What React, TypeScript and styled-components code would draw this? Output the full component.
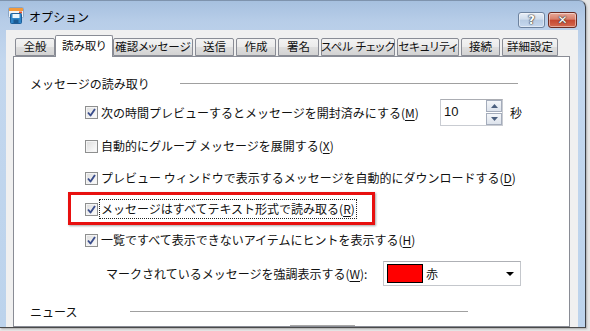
import React from 'react';
import styled, { createGlobalStyle } from 'styled-components';

const Global = createGlobalStyle`
  html, body { margin: 0; padding: 0; background: #ececec; }
  body {
    font-family: "Noto Sans CJK JP", "Noto Sans", sans-serif;
    font-size: 12px;
    color: #111;
  }
`;

const Stage = styled.div`
  width: 590px;
  height: 331px;
  overflow: hidden;
  background: #e6e6e6;
`;

const Window = styled.div`
  width: 586px;
  height: 328px;
  box-sizing: border-box;
  border-right: 1px solid #3a3f47;
  border-bottom: 1px solid #4a4a4a;
  border-top: 1px solid #7e93ad;
  border-top-right-radius: 7px;
  background: linear-gradient(#a6c0df 0px, #b7cde8 20px, #c3d7ee 60px, #bcd3ec 100%);
  display: flex;
  flex-direction: column;
  overflow: hidden;
  box-shadow: 1px 1px 2px rgba(0, 0, 0, 0.25);
`;

const TitleBar = styled.div`
  height: 29px;
  display: flex;
  align-items: center;
  padding: 0 8px 0 8px;
  flex: none;
`;

const Title = styled.div`
  font-size: 12px;
  margin-left: 5px;
  color: #000;
  margin-top: 2px;
  flex: 1;
`;

const CaptionButtons = styled.div`
  display: flex;
  gap: 3px;
  align-self: flex-start;
  margin-top: 11px;
`;

const CapButton = styled.div<{ $close?: boolean }>`
  width: ${(p) => (p.$close ? 29 : 27)}px;
  height: 16px;
  box-sizing: border-box;
  border-radius: 3px;
  border: 1px solid ${(p) => (p.$close ? '#6b2b22' : '#6d829e')};
  background: ${(p) =>
    p.$close
      ? 'linear-gradient(#e9a999 0%, #d77e6a 45%, #c5452e 50%, #d4694f 100%)'
      : 'linear-gradient(#e7eef7 0%, #cfdcec 45%, #b7cbe3 50%, #c6d8ee 100%)'};
  box-shadow: inset 0 0 0 1px rgba(255, 255, 255, 0.45);
  display: flex;
  align-items: center;
  justify-content: center;
  color: #fff;
  font-family: "DejaVu Sans", sans-serif;
  font-weight: bold;
  font-size: 12px;
  line-height: 1;
  text-shadow: 0 0 1px #333, 0 0 1px #333, 0 0 2px #555;
`;

const FrameBody = styled.div`
  flex: 1;
  display: flex;
  padding: 0 7px 0 6px;
  min-height: 0;
`;

const Client = styled.div`
  flex: 1;
  background: #f0f0f0;
  padding: 6px 8px 0 7px;
  display: flex;
  flex-direction: column;
  min-height: 0;
`;

const TabRow = styled.div`
  height: 20px;
  display: flex;
  align-items: flex-end;
  padding-left: 2px;
  flex: none;
  position: relative;
  z-index: 1;
`;

const Tab = styled.div<{ $w: number; $gap: number; $active?: boolean }>`
  width: ${(p) => p.$w}px;
  margin-left: ${(p) => p.$gap}px;
  box-sizing: border-box;
  height: ${(p) => (p.$active ? 22 : 18)}px;
  margin-bottom: ${(p) => (p.$active ? -1 : 0)}px;
  border: 1px solid #898c95;
  border-bottom: ${(p) => (p.$active ? 'none' : '1px solid #898c95')};
  border-radius: 2px 2px 0 0;
  background: ${(p) =>
    p.$active
      ? '#fff'
      : 'linear-gradient(#f3f3f3 0%, #ebebeb 50%, #dedede 51%, #d3d3d3 100%)'};
  display: flex;
  align-items: center;
  justify-content: center;
  font-size: 11.5px;
  line-height: 1;
  font-feature-settings: "palt";
  padding-bottom: ${(p) => (p.$active ? 2 : 0)}px;
  white-space: nowrap;
  flex: none;
`;

const Panel = styled.div`
  flex: 1;
  background: #fff;
  border: 1px solid #898c95;
  padding-left: 16px;
  display: flex;
  flex-direction: column;
  min-height: 0;
  overflow: hidden;
`;

const GroupHeader = styled.div<{ $top: number; $lineStart: number }>`
  margin-top: ${(p) => p.$top}px;
  height: 20px;
  display: grid;
  grid-template-columns: ${(p) => p.$lineStart}px 338px;
  align-items: center;
  flex: none;
`;

const GroupLabel = styled.div`
  font-size: 12px;
  white-space: nowrap;
`;

const GroupLine = styled.div`
  height: 1px;
  background: #a0a0a0;
`;

const Row = styled.div<{ $top: number; $indent?: number; $h?: number }>`
  margin-top: ${(p) => p.$top}px;
  margin-left: ${(p) => p.$indent ?? 55}px;
  height: ${(p) => p.$h ?? 20}px;
  display: flex;
  align-items: center;
  flex: none;
  white-space: nowrap;
`;

const Box = styled.span`
  width: 13px;
  height: 13px;
  box-sizing: border-box;
  border: 1px solid #8e8f8f;
  background: linear-gradient(135deg, #dcdcdc 0%, #f4f4f4 70%, #fdfdfd 100%);
  box-shadow: inset 0 0 0 1px #f4f4f4;
  display: flex;
  align-items: center;
  justify-content: center;
  flex: none;
  margin-right: 3px;
`;

const Label = styled.span<{ $focus?: boolean; $w?: number }>`
  box-sizing: border-box;
  font-size: 12px;
  line-height: 16px;
  padding: 1px 1px;
  border: 1px ${(p) => (p.$focus ? 'dotted #222' : 'solid transparent')};
  margin-left: -2px;
  ${(p) => (p.$w ? `width: ${p.$w}px; flex: none;` : '')}
`;

const Key = styled.span`
  text-decoration: underline;
  text-underline-offset: 2px;
`;

const Highlight = styled.div`
  margin-top: 4px;
  margin-left: 38px;
  width: 307px;
  height: 33px;
  box-sizing: border-box;
  border: 3px solid #e8100f;
  box-shadow: 1px 1px 2px rgba(0, 0, 0, 0.35);
  display: flex;
  align-items: center;
  padding-left: 14px;
  padding-top: 1px;
  flex: none;
  white-space: nowrap;
`;

const Spin = styled.div`
  width: 63px;
  height: 27px;
  box-sizing: border-box;
  border: 1px solid #c9ccd2;
  border-top-color: #abadb3;
  display: flex;
  background: #fff;
  flex: none;
`;

const SpinValue = styled.div`
  flex: 1;
  padding-left: 3px;
  font-family: "Liberation Sans", "Noto Sans", sans-serif;
  font-size: 13px;
  line-height: 24px;
`;

const SpinButtons = styled.div`
  width: 16px;
  display: flex;
  flex-direction: column;
  gap: 1px;
`;

const SpinBtn = styled.div`
  flex: 1;
  border: 1px solid #a4acbb;
  background: linear-gradient(#f4f6f9, #dde3ec);
  display: flex;
  align-items: center;
  justify-content: center;
`;

const Unit = styled.span`
  margin-left: 7px;
  font-size: 12px;
`;

const Combo = styled.div`
  width: 138px;
  height: 25px;
  box-sizing: border-box;
  border: 1px solid #c4c7cc;
  border-top-color: #aeb0b5;
  background: #fff;
  display: flex;
  align-items: center;
  padding-left: 3px;
  flex: none;
`;

const Swatch = styled.div<{ $color: string }>`
  width: 36px;
  height: 19px;
  box-sizing: border-box;
  border: 1px solid #000;
  background: ${(p) => p.$color};
  flex: none;
`;

const ComboText = styled.span`
  margin-left: 3px;
  flex: 1;
`;

const ComboArrow = styled.div`
  width: 0;
  height: 0;
  border-left: 4px solid transparent;
  border-right: 4px solid transparent;
  border-top: 4px solid #000;
  margin-right: 6px;
`;

const StubButton = styled.div`
  margin-top: 4px;
  margin-left: 260px;
  width: 65px;
  height: 12px;
  box-sizing: border-box;
  border: 1px solid #a8a8a8;
  border-bottom: none;
  flex: none;
`;

const Check = () => (
  <svg width="9" height="9" viewBox="0 0 9 9">
    <path d="M1 4.5 L3.5 7.5 L8 1" fill="none" stroke="#3b4e8c" strokeWidth="1.9" strokeLinejoin="round" />
  </svg>
);

const Tri = ({ up }: { up?: boolean }) => (
  <svg width="7" height="4" viewBox="0 0 7 4">
    <path d={up ? 'M0 4 L3.5 0 L7 4 Z' : 'M0 0 L3.5 4 L7 0 Z'} fill="#4c607f" />
  </svg>
);

const AppIcon = () => (
  <svg width="16" height="17" viewBox="0 0 16 17">
    <rect x="0.5" y="0.5" width="15" height="10" rx="1" fill="#eef3f9" stroke="#8aa5c5" />
    <rect x="1" y="1" width="14" height="3" fill="#f39a3c" />
    <rect x="11" y="4.5" width="3" height="2" fill="#e2502c" />
    <rect x="2.5" y="6.5" width="11" height="10" rx="1" fill="#2f86c9" stroke="#1d5f99" />
    <rect x="4.5" y="7" width="7" height="4" fill="#eaf4fb" />
    <rect x="5.5" y="12.5" width="5" height="3.5" fill="#1b5a92" />
  </svg>
);

const tabs: { label: string; w: number; gap: number; active?: boolean }[] = [
  { label: '全般', w: 40, gap: 0 },
  { label: '読み取り', w: 58, gap: 0, active: true },
  { label: '確認メッセージ', w: 80, gap: 0 },
  { label: '送信', w: 39, gap: 2 },
  { label: '作成', w: 40, gap: 2 },
  { label: '署名', w: 41, gap: 2 },
  { label: 'スペル チェック', w: 74, gap: 2 },
  { label: 'セキュリティ', w: 62, gap: 2 },
  { label: '接続', w: 39, gap: 2 },
  { label: '詳細設定', w: 56, gap: 2 },
];

export default function App() {
  return (
    <Stage>
      <Global />
      <Window>
        <TitleBar>
          <AppIcon />
          <Title>オプション</Title>
          <CaptionButtons>
            <CapButton>?</CapButton>
            <CapButton $close>✕</CapButton>
          </CaptionButtons>
        </TitleBar>
        <FrameBody>
          <Client>
            <TabRow>
              {tabs.map((t) => (
                <Tab key={t.label} $w={t.w} $gap={t.gap} $active={t.active}>
                  {t.label}
                </Tab>
              ))}
            </TabRow>
            <Panel>
              <GroupHeader $top={16} $lineStart={150}>
                <GroupLabel>メッセージの読み取り</GroupLabel>
                <GroupLine />
              </GroupHeader>

              <Row $top={6} $h={27}>
                <Box>
                  <Check />
                </Box>
                <Label $w={341}>
                  次の時間プレビューするとメッセージを開封済みにする(<Key>M</Key>)
                </Label>
                <Spin>
                  <SpinValue>10</SpinValue>
                  <SpinButtons>
                    <SpinBtn>
                      <Tri up />
                    </SpinBtn>
                    <SpinBtn>
                      <Tri />
                    </SpinBtn>
                  </SpinButtons>
                </Spin>
                <Unit>秒</Unit>
              </Row>

              <Row $top={10}>
                <Box />
                <Label>
                  自動的にグループ メッセージを展開する(<Key>X</Key>)
                </Label>
              </Row>

              <Row $top={12}>
                <Box>
                  <Check />
                </Box>
                <Label>
                  プレビュー ウィンドウで表示するメッセージを自動的にダウンロードする(<Key>D</Key>)
                </Label>
              </Row>

              <Highlight>
                <Box>
                  <Check />
                </Box>
                <Label $focus>
                  メッセージはすべてテキスト形式で読み取る(<Key>R</Key>)
                </Label>
              </Highlight>

              <Row $top={5}>
                <Box>
                  <Check />
                </Box>
                <Label>
                  一覧ですべて表示できないアイテムにヒントを表示する(<Key>H</Key>)
                </Label>
              </Row>

              <Row $top={11} $indent={76} $h={25}>
                <Label $w={279}>
                  マークされているメッセージを強調表示する(<Key>W</Key>):
                </Label>
                <Combo>
                  <Swatch $color="#ff0000" />
                  <ComboText>赤</ComboText>
                  <ComboArrow />
                </Combo>
              </Row>

              <GroupHeader $top={15} $lineStart={100}>
                <GroupLabel>ニュース</GroupLabel>
                <GroupLine />
              </GroupHeader>

              <StubButton />
            </Panel>
          </Client>
        </FrameBody>
      </Window>
    </Stage>
  );
}
